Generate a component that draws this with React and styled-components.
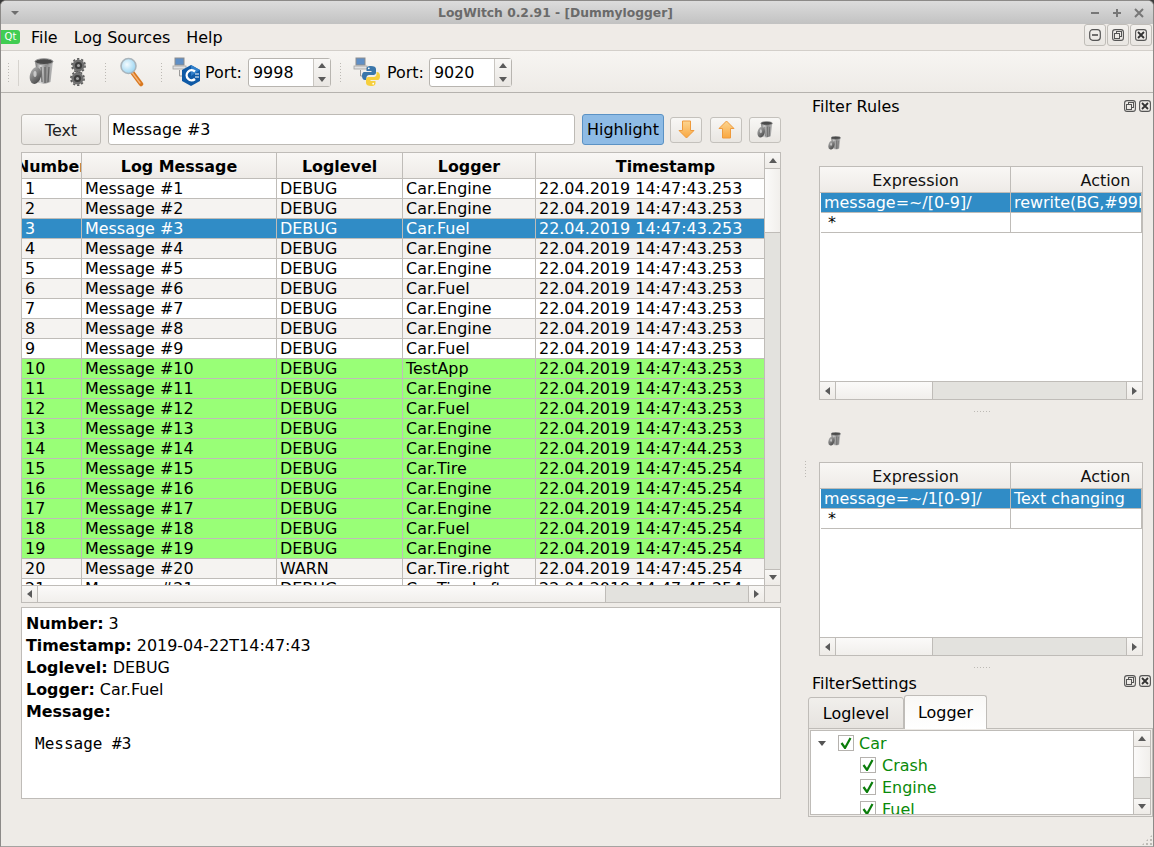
import React from "react";
import styled, { createGlobalStyle } from "styled-components";

const GlobalStyle = createGlobalStyle`
  html, body {
    margin: 0;
    padding: 0;
    background: #3a3a3a;
  }
  body {
    font-family: "DejaVu Sans", sans-serif;
    font-size: 15.95px;
    color: #000;
    overflow: hidden;
  }
`;

const LINE = "#bfbcb8";
const HIGHLIGHT = "#308cc6";

const Window = styled.div`
  position: relative;
  width: 1154px;
  height: 847px;
  box-sizing: border-box;
  display: flex;
  flex-direction: column;
  background: #eeebe7;
  border: 1px solid #8c8a88;
  border-bottom-color: #a5a3a1;
  border-radius: 6px 6px 0 0;
  overflow: hidden;
`;

const TitleBar = styled.div`
  height: 23px;
  flex: none;
  display: flex;
  align-items: center;
  justify-content: space-between;
  padding: 0 7px 0 10px;
  background: linear-gradient(#dcdcdc, #c2c2c2);
`;

const TitleText = styled.div`
  font-size: 12.3px;
  font-weight: bold;
  color: #6a6a6a;
  margin-left: 4px;
`;

const TitleArrow = styled.div`
  width: 0;
  height: 0;
  border-left: 4px solid transparent;
  border-right: 4px solid transparent;
  border-top: 4px solid #6e6e6e;
`;

const WindowControls = styled.div`
  display: flex;
  gap: 8px;
  color: #777;
`;

const MenuBar = styled.div`
  height: 27px;
  flex: none;
  box-sizing: border-box;
  display: flex;
  align-items: flex-start;
  border-bottom: 1px solid #d3cfca;
  background: #efebe7;
`;

const QtBadge = styled.div`
  width: 19px;
  height: 14px;
  margin: 6px 11px 0 0;
  background: #41cd52;
  color: #fff;
  font-size: 10px;
  line-height: 14px;
  text-align: center;
  border-radius: 0 3px 3px 0;
`;

const MenuItem = styled.div`
  margin: 4px 16px 0 0;
  line-height: 20px;
`;

const MdiButtons = styled.div`
  display: flex;
  margin-left: auto;
  gap: 1px;
  padding-right: 1px;
`;

const MdiButton = styled.div`
  width: 22px;
  height: 22px;
  box-sizing: border-box;
  display: flex;
  align-items: center;
  justify-content: center;
  border: 1px solid #c0bdb8;
  border-radius: 3px;
  background: linear-gradient(#f3f1ee, #e9e6e2);
`;

const ToolBar = styled.div`
  height: 42px;
  flex: none;
  box-sizing: border-box;
  display: flex;
  align-items: center;
  padding: 2px 0 0 6px;
  border-bottom: 1px solid #b5b2ae;
  background: linear-gradient(#f7f5f2, #eeebe7);
`;

const Grip = styled.div`
  width: 3px;
  height: 22px;
  flex: none;
  margin-left: ${(p) => p.$left || 0}px;
  background-image: radial-gradient(#bdbab5 0.8px, transparent 1px);
  background-size: 3px 3px;
`;

const ToolSep = styled.div`
  width: 1px;
  height: 26px;
  margin-left: 8px;
  background: #d6d3ce;
`;

const ToolIcon = styled.div`
  display: flex;
  flex: none;
  margin: -2px 0 0 ${(p) => p.$left || 0}px;
`;

const PortLabel = styled.span`
  margin: 0 ${(p) => p.$gap}px 0 5px;
`;

const SpinBox = styled.div`
  width: 83px;
  height: 29px;
  box-sizing: border-box;
  display: flex;
  flex: none;
  background: #fff;
  border: 1px solid #b8b5b0;
  border-radius: 3px;
`;

const SpinValue = styled.div`
  flex: 1;
  padding-left: 4px;
  line-height: 27px;
`;

const SpinButtons = styled.div`
  width: 16px;
  display: flex;
  flex-direction: column;
  border-left: 1px solid #c9c6c1;
  background: linear-gradient(#f8f7f5, #e9e6e2);
`;

const SpinButton = styled.div`
  flex: 1;
  display: flex;
  align-items: center;
  justify-content: center;
`;

const Arrow = styled.div`
  width: 0;
  height: 0;
  ${(p) =>
    p.$dir === "up" || p.$dir === "down"
      ? `border-left: 4px solid transparent;
         border-right: 4px solid transparent;
         border-${p.$dir === "up" ? "bottom" : "top"}: 5px solid #5a5a5a;`
      : `border-top: 4px solid transparent;
         border-bottom: 4px solid transparent;
         border-${p.$dir === "left" ? "right" : "left"}: 5px solid #5a5a5a;`}
`;

const Body = styled.div`
  flex: 1;
  min-height: 0;
  display: flex;
`;

const LeftPane = styled.div`
  width: 800px;
  flex: none;
  box-sizing: border-box;
  padding: 21px 20px 0 20px;
  display: flex;
  flex-direction: column;
`;

const SearchRow = styled.div`
  height: 31px;
  flex: none;
  display: flex;
  align-items: center;
  margin-bottom: 7px;
`;

const PushButton = styled.div`
  width: 80px;
  height: 31px;
  box-sizing: border-box;
  flex: none;
  padding-top: 1px;
  display: flex;
  align-items: center;
  justify-content: center;
  color: #222;
  border: 1px solid #bdbab5;
  border-radius: 3px;
  background: linear-gradient(#f9f8f6, #e9e6e2);
`;

const SearchInput = styled.div`
  width: 467px;
  height: 31px;
  box-sizing: border-box;
  flex: none;
  margin-left: 7px;
  padding-left: 3px;
  line-height: 29px;
  background: #fff;
  border: 1px solid #bdbab5;
  border-radius: 3px;
`;

const HighlightButton = styled.div`
  width: 82px;
  height: 31px;
  box-sizing: border-box;
  flex: none;
  margin-left: 7px;
  text-align: center;
  line-height: 30px;
  background: #8ebbe5;
  border: 1px solid #5b92c4;
  border-radius: 3px;
`;

const IconButton = styled.div`
  width: 32px;
  height: 26px;
  box-sizing: border-box;
  flex: none;
  display: flex;
  align-items: center;
  justify-content: center;
  margin-left: ${(p) => p.$left}px;
  border: 1px solid #c4c1bc;
  border-radius: 3px;
  background: linear-gradient(#f8f7f5, #e9e6e2);
`;

const TableFrame = styled.div`
  height: 451px;
  flex: none;
  box-sizing: border-box;
  display: grid;
  grid-template-columns: minmax(0, 1fr) 16px;
  grid-template-rows: minmax(0, 1fr) 17px;
  border: 1px solid ${LINE};
  margin-bottom: 4px;
  background: #fff;
`;

const TableViewport = styled.div`
  min-width: 0;
  min-height: 0;
  overflow: hidden;
`;

const COLS = "60px 195px 126px 133px 260px";

const HeaderRow = styled.div`
  display: grid;
  grid-template-columns: ${COLS};
  height: 26px;
`;

const HeaderCell = styled.div`
  box-sizing: border-box;
  display: flex;
  justify-content: center;
  align-items: center;
  padding: 1px 0 0 ${(p) => p.$shift || 0}px;
  overflow: hidden;
  white-space: nowrap;
  font-weight: ${(p) => (p.$bold ? "bold" : "normal")};
  font-size: ${(p) => (p.$bold ? "15.9px" : "inherit")};
  color: ${(p) => (p.$bold ? "#000" : "#111")};
  background: linear-gradient(#f9f7f5, #eeebe7);
  border-right: 1px solid ${LINE};
  border-bottom: 1px solid ${LINE};
`;

const LogRow = styled.div`
  display: grid;
  grid-template-columns: ${COLS};
  height: 20px;
  background: ${(p) =>
    p.$selected ? HIGHLIGHT : p.$match ? "#99ff77" : p.$alt ? "#f5f3f1" : "#fff"};
  color: ${(p) => (p.$selected ? "#fff" : "#000")};
`;

const Cell = styled.div`
  box-sizing: border-box;
  padding-left: ${(p) => p.$indent || 3}px;
  line-height: 19px;
  white-space: nowrap;
  overflow: hidden;
  border-right: 1px solid ${LINE};
  border-bottom: 1px solid ${LINE};
`;

const VScroll = styled.div`
  display: flex;
  flex-direction: column;
  border-left: 1px solid ${LINE};
  background: #e3e2de;
`;

const HScroll = styled.div`
  display: flex;
  border-top: 1px solid ${LINE};
  background: #e3e2de;
`;

const ScrollButton = styled.div`
  flex: none;
  box-sizing: border-box;
  display: flex;
  align-items: center;
  justify-content: center;
  width: ${(p) => (p.$vertical ? "auto" : "16px")};
  height: ${(p) => (p.$vertical ? "16px" : "auto")};
  background: linear-gradient(#f8f7f5, #eeebe7);
  border-${(p) => p.$edge}: 1px solid ${LINE};
`;

const ScrollHandle = styled.div`
  flex: none;
  box-sizing: border-box;
  width: ${(p) => (p.$vertical ? "auto" : `${p.$size}px`)};
  height: ${(p) => (p.$vertical ? `${p.$size}px` : "auto")};
  background: ${(p) =>
    p.$vertical
      ? "linear-gradient(90deg, #fbfaf9, #f1efec)"
      : "linear-gradient(#fbfaf9, #f1efec)"};
  border-${(p) => (p.$vertical ? "bottom" : "right")}: 1px solid ${LINE};
`;

const ScrollTrough = styled.div`
  flex: 1;
`;

const ScrollCorner = styled.div`
  border-top: 1px solid ${LINE};
  border-left: 1px solid ${LINE};
  background: #eeebe7;
`;

const DetailPane = styled.div`
  height: 192px;
  flex: none;
  box-sizing: border-box;
  padding: 5px 4px 0;
  background: #fff;
  border: 1px solid ${LINE};
`;

const DetailLine = styled.div`
  line-height: 22px;
  height: 22px;
`;

const DetailLabel = styled.b`
  font-weight: bold;
  font-size: 15.9px;
`;

const DetailMessage = styled.pre`
  margin: 10px 0 0 9px;
  font-family: "DejaVu Sans Mono", monospace;
  font-size: 16px;
  line-height: 22px;
`;

const DockSplitter = styled.div`
  width: 8px;
  flex: none;
  display: flex;
  align-items: center;
  justify-content: center;
  padding-bottom: 17px;
  box-sizing: border-box;
`;

const VDots = styled.div`
  width: 3px;
  height: 18px;
  margin-top: 15px;
  background-image: radial-gradient(#bdbab5 0.8px, transparent 1px);
  background-size: 3px 3px;
`;

const RightPane = styled.div`
  flex: 1;
  min-width: 0;
  display: flex;
  flex-direction: column;
`;

const DockTitleRow = styled.div`
  height: ${(p) => p.$height}px;
  flex: none;
  display: flex;
  align-items: center;
  justify-content: space-between;
  padding: 0 2px 0 3px;
`;

const DockButtons = styled.div`
  display: flex;
  gap: 3px;
  align-self: flex-start;
  margin-top: ${(p) => p.$top}px;
`;

const RuleTools = styled.div`
  height: ${(p) => p.$height}px;
  flex: none;
  box-sizing: border-box;
  display: flex;
  align-items: flex-end;
  padding: 0 0 16px 19px;
`;

const RuleTable = styled.div`
  height: ${(p) => p.$height}px;
  width: 324px;
  flex: none;
  margin-left: 10px;
  box-sizing: border-box;
  display: flex;
  flex-direction: column;
  overflow: hidden;
  background: #fff;
  border: 1px solid ${LINE};
`;

const RuleHeader = styled.div`
  display: grid;
  grid-template-columns: 191px 190px;
  height: 26px;
  flex: none;
`;

const RuleRow = styled.div`
  display: grid;
  grid-template-columns: 190px 131px;
  height: 20px;
  flex: none;
  margin-left: 1px;
  background: ${(p) => (p.$selected ? HIGHLIGHT : "#fff")};
  color: ${(p) => (p.$selected ? "#fff" : "#000")};
`;

const RuleSpacer = styled.div`
  flex: 1;
`;

const RuleScroll = styled(HScroll)`
  height: 17px;
  flex: none;
`;

const HSplitter = styled.div`
  height: ${(p) => p.$height}px;
  flex: none;
  display: flex;
  align-items: center;
  justify-content: center;
  padding-left: 2px;
`;

const HDots = styled.div`
  width: 18px;
  height: 3px;
  background-image: radial-gradient(#bdbab5 0.8px, transparent 1px);
  background-size: 3px 3px;
`;

const SettingsTitle = styled.span`
  margin-top: -6px;
`;

const TabBar = styled.div`
  display: flex;
  align-items: flex-end;
  height: 34px;
  flex: none;
  margin: 0 0 -1px -1px;
  position: relative;
  z-index: 1;
`;

const Tab = styled.div`
  box-sizing: border-box;
  width: ${(p) => p.$width}px;
  height: ${(p) => (p.$active ? 34 : 32)}px;
  display: flex;
  align-items: center;
  justify-content: center;
  border: 1px solid ${LINE};
  border-bottom: ${(p) => (p.$active ? "none" : `1px solid ${LINE}`)};
  border-radius: 3px 3px 0 0;
  background: ${(p) =>
    p.$active ? "linear-gradient(#f9f8f6, #fff)" : "linear-gradient(#f1efec, #e6e3df)"};
`;

const TabPane = styled.div`
  width: 345px;
  height: 89px;
  flex: none;
  box-sizing: border-box;
  padding: 1px;
  margin-left: -1px;
  border: 1px solid ${LINE};
  background: #eeebe7;
`;

const TreeFrame = styled.div`
  height: 100%;
  display: flex;
  background: #fff;
  border: 1px solid ${LINE};
  box-sizing: border-box;
`;

const TreeBody = styled.div`
  flex: 1;
  min-width: 0;
  overflow: hidden;
  padding-top: 1px;
`;

const TreeRow = styled.div`
  height: 22px;
  display: flex;
  align-items: center;
  padding-left: ${(p) => (p.$child ? 49 : 7)}px;
  color: #0a8a0a;
`;

const TreeArrow = styled.div`
  width: 0;
  height: 0;
  margin-right: 12px;
  border-left: 4px solid transparent;
  border-right: 4px solid transparent;
  border-top: 5px solid #555;
`;

const CheckBox = styled.div`
  width: 16px;
  height: 16px;
  box-sizing: border-box;
  flex: none;
  margin-right: ${(p) => (p.$root ? 5 : 6)}px;
  display: flex;
  align-items: center;
  justify-content: center;
  background: #fff;
  border: 1px solid #b5b2ae;
`;

const TreeScroll = styled(VScroll)`
  width: 16px;
  flex: none;
`;

const ResizeCorner = styled.div`
  position: absolute;
  right: 0;
  bottom: 0;
  width: 12px;
  height: 12px;
  background-image: radial-gradient(#bdbab5 0.8px, transparent 1px);
  background-size: 4px 4px;
  clip-path: polygon(100% 0, 100% 100%, 0 100%);
`;

const TrashIcon = ({ size = 24 }) => (
  <svg width={size} height={size * 1.08} viewBox="0 0 25 27">
    <defs>
      <linearGradient id="trashBody" x1="0" x2="1" y1="0" y2="0">
        <stop offset="0" stopColor="#6e6e6e" />
        <stop offset="0.3" stopColor="#d6d6d6" />
        <stop offset="0.6" stopColor="#8a8a8a" />
        <stop offset="1" stopColor="#bdbdbd" />
      </linearGradient>
      <linearGradient id="trashLid" x1="0" x2="1" y1="0" y2="1">
        <stop offset="0" stopColor="#b8b8b8" />
        <stop offset="1" stopColor="#3c3c3c" />
      </linearGradient>
    </defs>
    <path d="M6 3 L24 3 L21.5 24 Q15 27 9 24.5 Z" fill="url(#trashBody)" />
    <path d="M12 9 L13 24 M16 9 L16 25 M20 9 L19 24" stroke="#555" strokeWidth="1.3" opacity="0.75" />
    <ellipse cx="15" cy="3.6" rx="9" ry="2.9" fill="#4a4a4a" stroke="#9a9a9a" />
    <ellipse cx="6.5" cy="17.5" rx="5.6" ry="8.6" transform="rotate(14 6.5 17.5)" fill="url(#trashLid)" />
    <ellipse cx="6" cy="16" rx="1.6" ry="3" fill="#d8d8d8" opacity="0.8" />
  </svg>
);

const Gear = ({ cx, cy }) => (
  <g>
    <circle cx={cx} cy={cy} r="6.6" fill="none" stroke="#5d5d5d" strokeWidth="1.7" strokeDasharray="2.3 1.9" />
    <circle cx={cx} cy={cy} r="6" fill="#6f6f6f" />
    <circle cx={cx} cy={cy} r="3.6" fill="#3c3c3c" />
    <circle cx={cx} cy={cy} r="1.5" fill="#a5a5a5" />
  </g>
);

const GearsIcon = () => (
  <svg width="16" height="28" viewBox="0 0 16 28">
    <Gear cx={8.5} cy={7.5} />
    <Gear cx={7.5} cy={20.5} />
  </svg>
);

const SearchIcon = () => (
  <svg width="24" height="30" viewBox="0 0 24 30">
    <defs>
      <radialGradient id="lens" cx="0.4" cy="0.4" r="0.7">
        <stop offset="0" stopColor="#f3fbff" />
        <stop offset="1" stopColor="#8fd0f0" />
      </radialGradient>
    </defs>
    <path d="M12 15 L21 27" stroke="#d9781f" strokeWidth="4.5" strokeLinecap="round" />
    <path d="M12.5 16 L20 26" stroke="#f4b47a" strokeWidth="1.4" strokeLinecap="round" />
    <circle cx="8.5" cy="9" r="7.5" fill="url(#lens)" stroke="#a9b4bb" strokeWidth="1.6" />
  </svg>
);

const Terminal = () => (
  <g>
    <rect x="3" y="1" width="9" height="7" fill="#5f8fc6" stroke="#8d8d8d" />
    <rect x="1" y="9" width="13" height="3" fill="#e2e2e2" stroke="#a0a0a0" strokeWidth="0.8" />
    <path d="M7.5 13 V19 H13" fill="none" stroke="#9a9a9a" strokeWidth="1" />
  </g>
);

const CppNetIcon = () => (
  <svg width="28" height="30" viewBox="0 0 28 30">
    <Terminal />
    <path d="M19 8 L28 13 V24 L19 29 L10 24 V13 Z" fill="#0f5aa6" />
    <path d="M19 8 L28 13 L19 19 Z" fill="#2f7fcb" />
    <path d="M23 14.5 A5 5 0 1 0 23 22" fill="none" stroke="#fff" strokeWidth="2.4" />
    <path d="M23 17 h4 M23 20 h4" stroke="#fff" strokeWidth="1" />
  </svg>
);

const PythonNetIcon = () => (
  <svg width="29" height="30" viewBox="0 0 29 30">
    <Terminal />
    <path d="M18 9 C14 9 13.5 10.5 13.5 12 V14 H18.5 V15 H11.5 C9.5 15 9 17 9 19 C9 21 10 23 12 23 H13.5 V20.5 C13.5 19 14.8 18 16 18 H20.5 C22 18 23 17 23 15.5 V12 C23 10.3 21 9 18 9 Z" fill="#3a76aa" />
    <path d="M18 29 C22 29 22.5 27.5 22.5 26 V24 H17.5 V23 H24.5 C26.5 23 27 21 27 19 C27 17 26 15 24 15 H23.5 V17.5 C23.5 19 22.2 20 21 20 H15.5 C14 20 13 21 13 22.5 V26 C13 27.7 15 29 18 29 Z" fill="#f6cf3e" />
    <circle cx="15.8" cy="11.3" r="0.9" fill="#fff" />
    <circle cx="20.2" cy="26.7" r="0.9" fill="#fff" />
  </svg>
);

const ArrowIcon = ({ up }) => (
  <svg width="17" height="19" viewBox="0 0 17 19">
    <defs>
      <linearGradient id="orangeFill" x1="0" x2="0" y1="0" y2="1">
        <stop offset="0" stopColor="#fcd591" />
        <stop offset="1" stopColor="#f9a740" />
      </linearGradient>
    </defs>
    <path
      d={up ? "M8.5 1 L16 8.5 H12.5 V18 H4.5 V8.5 H1 Z" : "M4.5 1 H12.5 V10.5 H16 L8.5 18 L1 10.5 H4.5 Z"}
      fill="url(#orangeFill)"
      stroke="#ee9a3c"
      strokeWidth="1"
      strokeLinejoin="round"
    />
  </svg>
);

const CheckMark = () => (
  <svg width="12" height="12" viewBox="0 0 12 12">
    <path d="M1.5 6 L5 11 L10.5 1" fill="none" stroke="#0a7d0a" strokeWidth="2.2" />
  </svg>
);

const MinGlyph = () => (
  <svg width="12" height="12" viewBox="0 0 12 12">
    <rect x="0.7" y="0.7" width="10.6" height="10.6" rx="3" fill="none" stroke="#555" strokeWidth="1.2" />
    <path d="M3 6 H9" stroke="#444" strokeWidth="1.6" />
  </svg>
);

const FloatGlyph = () => (
  <svg width="12" height="12" viewBox="0 0 12 12">
    <rect x="0.6" y="0.6" width="10.8" height="10.8" rx="2.5" fill="none" stroke="#555" strokeWidth="1.1" />
    <rect x="4.5" y="2.5" width="5" height="5" fill="none" stroke="#555" />
    <rect x="2.5" y="4.5" width="5" height="5" fill="#eeebe7" stroke="#555" />
  </svg>
);

const CloseGlyph = () => (
  <svg width="12" height="12" viewBox="0 0 12 12">
    <rect x="0.6" y="0.6" width="10.8" height="10.8" rx="2.5" fill="none" stroke="#555" strokeWidth="1.1" />
    <path d="M3 3 L9 9 M9 3 L3 9" stroke="#333" strokeWidth="1.8" />
  </svg>
);

const WinGlyph = ({ d }) => (
  <svg width="14" height="14" viewBox="0 0 14 14">
    <path d={d} stroke="#777" strokeWidth="2" fill="none" />
  </svg>
);

const TS = "22.04.2019 14:47:";
const LOGS = [
  ["Car.Engine", "43.253"], ["Car.Engine", "43.253"], ["Car.Fuel", "43.253"],
  ["Car.Engine", "43.253"], ["Car.Engine", "43.253"], ["Car.Fuel", "43.253"],
  ["Car.Engine", "43.253"], ["Car.Engine", "43.253"], ["Car.Fuel", "43.253"],
  ["TestApp", "43.253"], ["Car.Engine", "43.253"], ["Car.Fuel", "43.253"],
  ["Car.Engine", "43.253"], ["Car.Engine", "44.253"], ["Car.Tire", "45.254"],
  ["Car.Engine", "45.254"], ["Car.Engine", "45.254"], ["Car.Fuel", "45.254"],
  ["Car.Engine", "45.254"], ["Car.Tire.right", "45.254"], ["Car.Tire.Left", "45.254"],
];

const HScrollBar = ({ handle }) => (
  <>
    <ScrollButton $edge="right"><Arrow $dir="left" /></ScrollButton>
    <ScrollHandle $size={handle} />
    <ScrollTrough />
    <ScrollButton $edge="left"><Arrow $dir="right" /></ScrollButton>
  </>
);

const RulePanel = ({ height, expression, action }) => (
  <RuleTable $height={height}>
    <RuleHeader>
      <HeaderCell $shift={1}>Expression</HeaderCell>
      <HeaderCell>Action</HeaderCell>
    </RuleHeader>
    <RuleRow $selected>
      <Cell>{expression}</Cell>
      <Cell>{action}</Cell>
    </RuleRow>
    <RuleRow>
      <Cell $indent={7}>*</Cell>
      <Cell />
    </RuleRow>
    <RuleSpacer />
    <RuleScroll><HScrollBar handle={97} /></RuleScroll>
  </RuleTable>
);

const App = () => (
  <>
    <GlobalStyle />
    <Window>
      <TitleBar>
        <TitleArrow />
        <TitleText>LogWitch 0.2.91 - [Dummylogger]</TitleText>
        <WindowControls>
          <WinGlyph d="M3 7 H11" />
          <WinGlyph d="M3 7 H11 M7 3 V11" />
          <WinGlyph d="M3 3 L11 11 M11 3 L3 11" />
        </WindowControls>
      </TitleBar>

      <MenuBar>
        <QtBadge>Qt</QtBadge>
        <MenuItem>File</MenuItem>
        <MenuItem>Log Sources</MenuItem>
        <MenuItem>Help</MenuItem>
        <MdiButtons>
          <MdiButton><MinGlyph /></MdiButton>
          <MdiButton><FloatGlyph /></MdiButton>
          <MdiButton><CloseGlyph /></MdiButton>
        </MdiButtons>
      </MenuBar>

      <ToolBar>
        <Grip />
        <ToolSep />
        <ToolIcon $left={10}><TrashIcon size={25} /></ToolIcon>
        <ToolIcon $left={16}><GearsIcon /></ToolIcon>
        <Grip $left={18} />
        <ToolIcon $left={13}><SearchIcon /></ToolIcon>
        <Grip $left={16} />
        <ToolIcon $left={9}><CppNetIcon /></ToolIcon>
        <PortLabel $gap={6}>Port:</PortLabel>
        <SpinBox>
          <SpinValue>9998</SpinValue>
          <SpinButtons>
            <SpinButton><Arrow $dir="up" /></SpinButton>
            <SpinButton><Arrow $dir="down" /></SpinButton>
          </SpinButtons>
        </SpinBox>
        <Grip $left={8} />
        <ToolIcon $left={11}><PythonNetIcon /></ToolIcon>
        <PortLabel $gap={5}>Port:</PortLabel>
        <SpinBox>
          <SpinValue>9020</SpinValue>
          <SpinButtons>
            <SpinButton><Arrow $dir="up" /></SpinButton>
            <SpinButton><Arrow $dir="down" /></SpinButton>
          </SpinButtons>
        </SpinBox>
      </ToolBar>

      <Body>
        <LeftPane>
          <SearchRow>
            <PushButton>Text</PushButton>
            <SearchInput>Message #3</SearchInput>
            <HighlightButton>Highlight</HighlightButton>
            <IconButton $left={6}><ArrowIcon /></IconButton>
            <IconButton $left={8}><ArrowIcon up /></IconButton>
            <IconButton $left={7}><TrashIcon size={16} /></IconButton>
          </SearchRow>

          <TableFrame>
            <TableViewport>
              <HeaderRow>
                <HeaderCell $bold>Number</HeaderCell>
                <HeaderCell $bold>Log Message</HeaderCell>
                <HeaderCell $bold>Loglevel</HeaderCell>
                <HeaderCell $bold>Logger</HeaderCell>
                <HeaderCell $bold>Timestamp</HeaderCell>
              </HeaderRow>
              {LOGS.map(([logger, time], i) => {
                const n = i + 1;
                return (
                  <LogRow key={n} $alt={n % 2 === 0} $selected={n === 3} $match={n >= 10 && n <= 19}>
                    <Cell>{n}</Cell>
                    <Cell>Message #{n}</Cell>
                    <Cell>{n === 20 ? "WARN" : "DEBUG"}</Cell>
                    <Cell>{logger}</Cell>
                    <Cell>{TS + time}</Cell>
                  </LogRow>
                );
              })}
            </TableViewport>
            <VScroll>
              <ScrollButton $vertical $edge="bottom"><Arrow $dir="up" /></ScrollButton>
              <ScrollHandle $vertical $size={64} />
              <ScrollTrough />
              <ScrollButton $vertical $edge="top"><Arrow $dir="down" /></ScrollButton>
            </VScroll>
            <HScroll><HScrollBar handle={568} /></HScroll>
            <ScrollCorner />
          </TableFrame>

          <DetailPane>
            <DetailLine><DetailLabel>Number:</DetailLabel> 3</DetailLine>
            <DetailLine><DetailLabel>Timestamp:</DetailLabel> 2019-04-22T14:47:43</DetailLine>
            <DetailLine><DetailLabel>Loglevel:</DetailLabel> DEBUG</DetailLine>
            <DetailLine><DetailLabel>Logger:</DetailLabel> Car.Fuel</DetailLine>
            <DetailLine><DetailLabel>Message:</DetailLabel></DetailLine>
            <DetailMessage>Message #3</DetailMessage>
          </DetailPane>
        </LeftPane>

        <DockSplitter><VDots /></DockSplitter>

        <RightPane>
          <DockTitleRow $height={26}>
            <span>Filter Rules</span>
            <DockButtons $top={7}>
              <FloatGlyph />
              <CloseGlyph />
            </DockButtons>
          </DockTitleRow>
          <RuleTools $height={47}><TrashIcon size={13} /></RuleTools>
          <RulePanel height={234} expression="message=~/[0-9]/" action="rewrite(BG,#99FF77)" />
          <HSplitter $height={22}><HDots /></HSplitter>
          <RuleTools $height={40}><TrashIcon size={13} /></RuleTools>
          <RulePanel height={194} expression="message=~/1[0-9]/" action="Text changing" />
          <HSplitter $height={22}><HDots /></HSplitter>
          <DockTitleRow $height={17}>
            <SettingsTitle>FilterSettings</SettingsTitle>
            <DockButtons $top={-3}>
              <FloatGlyph />
              <CloseGlyph />
            </DockButtons>
          </DockTitleRow>
          <TabBar>
            <Tab $width={96}>Loglevel</Tab>
            <Tab $width={83} $active>Logger</Tab>
          </TabBar>
          <TabPane>
            <TreeFrame>
              <TreeBody>
                <TreeRow>
                  <TreeArrow />
                  <CheckBox $root><CheckMark /></CheckBox>
                  Car
                </TreeRow>
                <TreeRow $child><CheckBox><CheckMark /></CheckBox>Crash</TreeRow>
                <TreeRow $child><CheckBox><CheckMark /></CheckBox>Engine</TreeRow>
                <TreeRow $child><CheckBox><CheckMark /></CheckBox>Fuel</TreeRow>
              </TreeBody>
              <TreeScroll>
                <ScrollButton $vertical $edge="bottom"><Arrow $dir="up" /></ScrollButton>
                <ScrollHandle $vertical $size={31} />
                <ScrollTrough />
                <ScrollButton $vertical $edge="top"><Arrow $dir="down" /></ScrollButton>
              </TreeScroll>
            </TreeFrame>
          </TabPane>
        </RightPane>
      </Body>
      <ResizeCorner />
    </Window>
  </>
);

export default App;
